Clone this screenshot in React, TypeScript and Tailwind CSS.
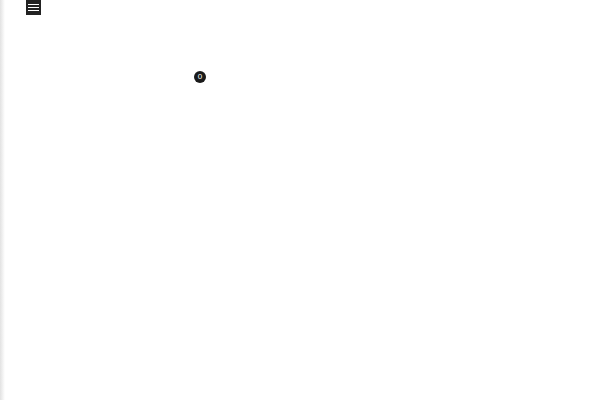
export default function App() {
  return (
    <div
      className="relative w-[600px] h-[400px] bg-white overflow-hidden"
      style={{ fontFamily: '"Liberation Sans", Arial, sans-serif' }}
    >
      <div className="absolute left-0 top-0 h-full w-[5px] bg-gradient-to-r from-[#e2e2e2] to-white" />
      <div className="absolute left-[26px] top-0 w-[15px] h-[15px] bg-[#222] flex flex-col items-center justify-center gap-[2px]">
        <div className="w-[11px] h-[1px] bg-white" />
        <div className="w-[11px] h-[1px] bg-white" />
        <div className="w-[11px] h-[1px] bg-white" />
      </div>
      <div className="absolute left-[194px] top-[71px] w-[12px] h-[12px] rounded-full bg-[#1a1a1a] text-white text-[8px] leading-none flex items-center justify-center">
        0
      </div>
    </div>
  );
}
